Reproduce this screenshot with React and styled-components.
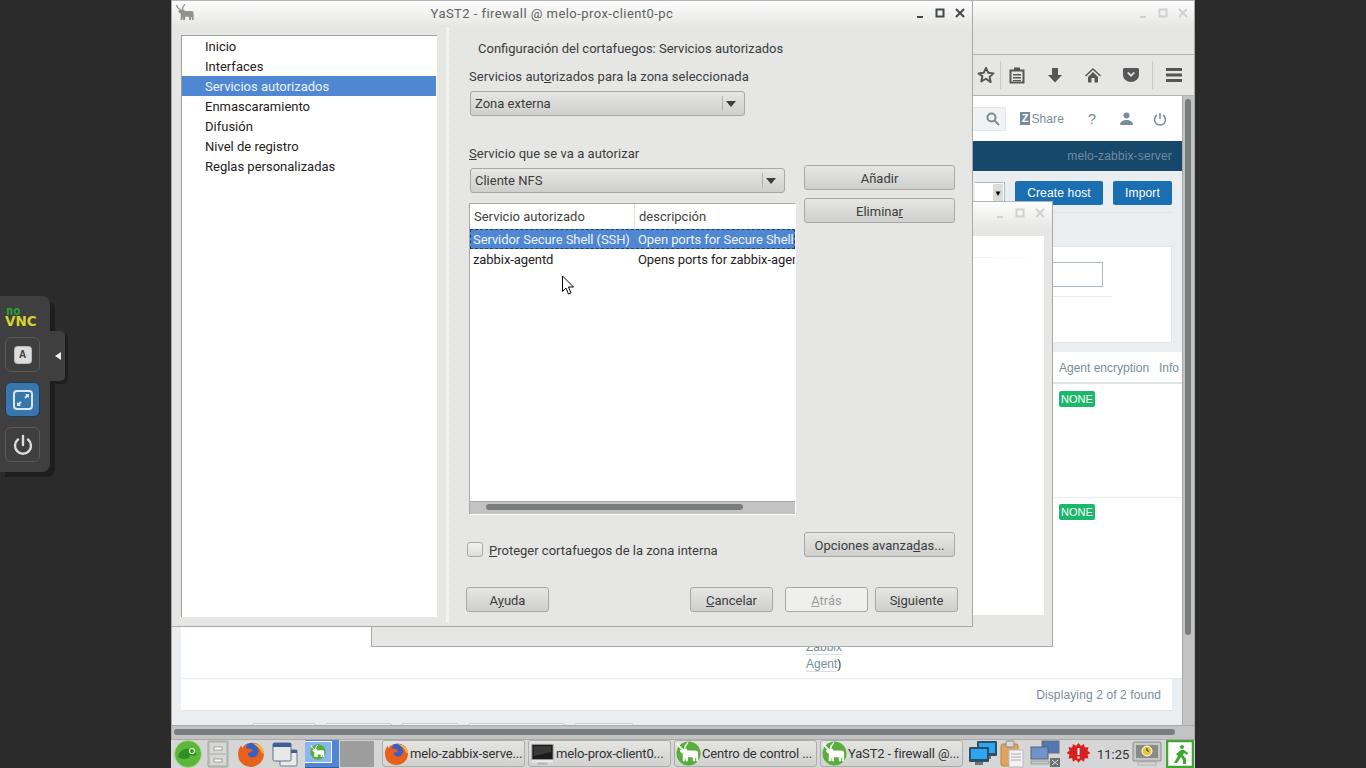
import React from "react";
import styled, { createGlobalStyle } from "styled-components";

const Global = createGlobalStyle`
  html, body { margin: 0; padding: 0; background: #2b2b2b; overflow: hidden; }
  * { box-sizing: border-box; }
`;

const Desktop = styled.div`
  position: relative; width: 1366px; height: 768px; overflow: hidden;
  background: #2b2b2b; font-family: Roboto, sans-serif; font-size: 13px; color: #3a3d3d;
`;

/* ---------- window chrome ---------- */
const Win = styled.section`
  position: absolute; left: ${p => p.$x}px; top: ${p => p.$y}px;
  width: ${p => p.$w}px; height: ${p => p.$h}px;
  display: flex; flex-direction: column; overflow: hidden;
  background: #e6e6e4; border: 1px solid #a9aaa8; border-top-color: #b5b5b5;
`;
const TitleBar = styled.header`
  flex: none; height: ${p => p.$h || 24}px; position: relative;
  display: flex; align-items: center; justify-content: center; padding-right: 40px;
  background: linear-gradient(#fdfdfd, #e8e8e6);
  color: #5d6363; font-size: 13px; letter-spacing: .45px;
`;
const WinButtons = styled.div`
  position: absolute; right: ${p => p.$r}px; top: 0; bottom: ${p => p.$b || 0}px;
  display: flex; align-items: center; gap: 8px;
  color: ${p => (p.$dim ? "#d0d2d0" : "#3f4a4a")};
`;
const WinBtn = styled.svg`width: 12px; height: 12px; display: block;`;
const Controls = ({ r, b, dim }) => (
  <WinButtons $r={r} $b={b} $dim={dim}>
    <WinBtn viewBox="0 0 12 12"><rect x="3" y="9" width="6" height="2" fill="currentColor" /></WinBtn>
    <WinBtn viewBox="0 0 12 12"><rect x="2.5" y="2.5" width="7" height="7" fill="none" stroke="currentColor" strokeWidth="2" /></WinBtn>
    <WinBtn viewBox="0 0 12 12"><path d="M2 2l8 8M10 2l-8 8" stroke="currentColor" strokeWidth="2" /></WinBtn>
  </WinButtons>
);
const TitleIcon = styled.svg`position: absolute; left: 3px; top: 2px; width: 21px; height: 21px;`;

/* ---------- browser ---------- */
const MenuGap = styled.div`flex: none; height: 30px; background: #e6e6e4; border-bottom: 1px solid #b4b4b2;`;
const NavBar = styled.div`
  flex: none; height: 41px; display: flex; align-items: center; justify-content: flex-end;
  background: #e6e6e4; border-bottom: 1px solid #b4b4b2; color: #565656;
`;
const NavSlot = styled.span`
  width: ${p => p.$w}px; display: flex; justify-content: center; align-items: center;
  height: 28px; ${p => p.$line && "border-left: 1px solid #c9c9c7;"}
`;
const BrowserBody = styled.div`flex: 1; min-height: 0; display: flex;`;
const Page = styled.main`
  flex: 1; min-width: 0; overflow: hidden; background: #ebeef0;
  font-family: "Liberation Sans", Arial, sans-serif; font-size: 12px; color: #768d99;
`;
const VScroll = styled.div`flex: none; width: 12px; background: #c2c3c2; border-left: 1px solid #a9aaa8; padding: 3px 2px 0 2px;`;
const VThumb = styled.div`width: 6px; height: 536px; border-radius: 3px; background: #7a7d7d;`;
const HScroll = styled.div`flex: none; height: 14px; background: #c2c3c2; border-top: 1px solid #a9aaa8; padding: 3px 19px 0 2px;`;
const HThumb = styled.div`height: 6px; border-radius: 3px; background: #7a7d7d;`;

const PageHead = styled.div`height: 45px; background: #fff; display: flex; align-items: center; justify-content: flex-end;`;
const SearchBox = styled.div`
  width: 40px; height: 24px; margin-right: 14px; padding-right: 5px; background: #f0f2f3; border: 1px solid #e6e9ea;
  border-left: 0; display: flex; align-items: center; justify-content: flex-end; color: #768d99;
`;
const ShareLink = styled.span`display: flex; align-items: center; gap: 1px; width: 44px; margin-right: 11px; letter-spacing: .1px;`;
const ShareZ = styled.b`
  width: 13px; height: 13px; background: #768d99; color: #fff; font-size: 11px; line-height: 13px;
  text-align: center; font-family: "Liberation Sans", sans-serif;
`;
const HeadIcon = styled.span`width: 34px; display: flex; justify-content: center; color: #768d99; font-size: 15px;`;
const HeadEnd = styled.span`width: 5px;`;
const BlueBar = styled.div`
  height: 30px; padding-right: 10px; background: #17476a; color: #6f8b9c; letter-spacing: .15px;
  display: flex; align-items: center; justify-content: flex-end;
`;
const ActionRow = styled.div`
  height: 42px; margin: 0 10px 0 9px; border-bottom: 1px solid #dfe4e6;
  display: flex; align-items: flex-start; justify-content: flex-end; padding-top: 10px; gap: 10px;
`;
const PageSelect = styled.div`
  width: 30px; height: 22px; margin-top: 1px; background: #fff; border: 1px solid #a9bac4; border-left: 0;
  display: flex; justify-content: flex-end; padding: 1px;
`;
const PageSelectArrow = styled.span`
  width: 10px; background: #dcdcdc; color: #000; font-size: 8px; line-height: 20px; text-align: center;
`;
const BlueBtn = styled.div`
  width: ${p => p.$w}px; height: 24px; border-radius: 2px; background: #1a6fb3; color: #fff; letter-spacing: .15px;
  display: flex; align-items: center; justify-content: center;
`;
const FilterCard = styled.div`
  margin: 33px 10px 9px 9px; height: 97px; background: #fff; border: 1px solid #e1e5e7;
  display: flex; flex-direction: column; align-items: flex-end; padding: 15px 68px 0 0;
`;
const FilterInput = styled.div`width: 52px; height: 25px; border: 1px solid #a9bac4;`;
const FilterRule = styled.div`width: 70px; margin: 9px -9px 0 0; border-top: 1px solid #e8ebed;`;
const HostTable = styled.div`margin-left: 9px; background: #fff;`;
const HostRow = styled.div`
  height: ${p => p.$h}px; display: grid; grid-template-columns: 625px 253px 100px 1fr;
  border-bottom: ${p => p.$b || 1}px solid ${p => p.$c || "#e8ebed"};
`;
const HostHead = styled(HostRow)`align-items: center; padding-top: 2px;`;
const HostCell = styled.div`padding-top: ${p => p.$t || 0}px;`;
const LowCell = styled.div`align-self: end; padding-bottom: 6px; line-height: 16.5px; color: #333;`;
const HostLink = styled.span`border-bottom: 1px solid #d8dfe3; color: #768d99;`;
const NoneBadge = styled.span`
  display: inline-block; width: 36px; height: 16px; line-height: 16px; text-align: center; border-radius: 2px;
  background: #1db76b; color: #fff; font-size: 11px;
`;
const TableFoot = styled.div`
  height: 32px; margin: 0 10px 0 9px; background: #fff; border-bottom: 1px solid #e1e5e7;
  display: flex; align-items: center; justify-content: flex-end; padding-right: 11px; letter-spacing: .12px;
`;
const PeekRow = styled.div`display: flex; margin: 12px 0 0 80px; gap: 9px;`;
const PeekBtn = styled.div`width: ${p => p.$w}px; height: 6px; border: 1px solid #c3ccd1; border-radius: 2px; background: #f4f6f7;`;

/* ---------- middle window ---------- */
const MidBody = styled.div`flex: 1; padding: 9px 8px 31px 0; display: flex;`;
const MidPanel = styled.div`flex: 1; background: #fff; padding-top: 21px;`;
const MidRule = styled.div`height: 1px; background: linear-gradient(90deg, #e6e6e6 80%, #fff);`;

/* ---------- YaST ---------- */
const YastBody = styled.div`flex: 1; min-height: 0; display: flex; padding: 10px 0 9px 9px;`;
const Tree = styled.nav`
  flex: none; width: 256px; background: #fff; border-top: 1px solid #9f9f9d; border-left: 1px solid #9f9f9d;
  color: #1f2121;
`;
const TreeItem = styled.div`
  height: 20px; line-height: 22px; padding-left: 23px; margin-right: 1px;
  ${p => p.$on && "background: #5087d3; color: #eef3fa;"}
`;
const Splitter = styled.div`
  flex: none; width: 3px; margin: -8px 0 -6px 9px;
  background: repeating-conic-gradient(#fff 0 25%, transparent 0 50%) 0 0 / 2px 2px;
`;
const Pane = styled.div`flex: 1; min-width: 0; padding-left: 20px; display: flex; flex-direction: column;`;
const Heading = styled.div`height: 20px; line-height: 22px; margin: 3px 0 8px 9px;`;
const Label = styled.div`height: 20px; line-height: 22px; letter-spacing: .05px;`;
const Combo = styled.div`
  width: ${p => p.$w}px; height: 25px; margin: 5px 0 0 1px; padding-left: 4px; border: 1px solid #a8a8a6; border-radius: 3px;
  background: linear-gradient(#e6e6e4, #cfcfcd); display: flex; align-items: center; justify-content: space-between;
`;
const ComboArrow = styled.span`
  width: 22px; height: 15px; padding-right: 5px; border-left: 1px solid #b4b4b2; display: flex; align-items: center; justify-content: center;
  &::after { content: ""; border: 5px solid transparent; border-top: 6px solid #3c3f3f; border-bottom: 0; }
`;
const MainGrid = styled.div`display: flex; margin-top: 27px;`;
const LeftCol = styled.div`width: 335px;`;
const SideCol = styled.div`padding-top: 22px; display: flex; flex-direction: column; gap: 8px;`;
const Btn = styled.button`
  width: ${p => p.$w}px; height: 25px; padding: 2px 0 0; border: 1px solid #a8a8a6; border-radius: 3px;
  font: 13px Roboto, sans-serif; color: ${p => (p.disabled ? "#9b9d9d" : "#3a3d3d")};
  background: ${p => (p.disabled ? "#efefee" : "linear-gradient(#e6e6e4, #cfcfcd)")};
`;
const Table = styled.div`
  width: 327px; height: 312px; margin-top: 10px; display: flex; flex-direction: column;
  background: #fff; border-top: 1px solid #a9aaa8; border-left: 1px solid #a9aaa8; border-bottom: 1px solid #fff; border-right: 1px solid #fff;
`;
const THead = styled.div`flex: none; height: 24px; display: flex; align-items: center; color: #3f4242;`;
const TH = styled.div`
  flex: none; width: ${p => p.$w}px; padding-left: 4px; height: 100%; line-height: 26px; white-space: nowrap;
  ${p => p.$line && "border-right: 1px solid #e3e3e1;"}
`;
const TBody = styled.div`flex: 1; min-height: 0; padding-top: 1px; color: #1f2121;`;
const TR = styled.div`
  height: 20px; display: flex; align-items: center; overflow: hidden; white-space: nowrap; letter-spacing: -.08px;
  ${p => p.$on && "background: #5087d3; color: #eef3fa; outline: 1px dashed #1d3f70; outline-offset: -1px;"}
`;
const TD = styled.div`flex: none; width: ${p => p.$w}px; padding-left: 3px;`;
const TScroll = styled.div`flex: none; height: 13px; background: #c2c3c2; border-top: 1px solid #a9aaa8; padding: 2px 0 0 16px;`;
const TThumb = styled.div`width: 257px; height: 6px; border-radius: 3px; background: #7a7d7d;`;
const CheckRow = styled.div`display: flex; margin-top: 17px; justify-content: space-between; padding-right: 17px;`;
const CheckLabel = styled.label`display: flex; align-items: center; gap: 6px; margin: 10px 0 0 -2px; height: 15px;`;
const CheckText = styled.span`margin-top: 2px;`;
const CheckBox = styled.span`
  width: 16px; height: 15px; border: 1px solid #a8a8a6; border-radius: 3px; background: linear-gradient(#f2f2f1, #dcdcda);
`;
const Actions = styled.div`display: flex; margin: 30px 14px 0 -3px; gap: 10px;`;
const Push = styled.div`flex: 1;`;
const TightBtn = styled(Btn)`margin-left: ${p => p.$ml}px;`;

/* ---------- taskbar ---------- */
const Taskbar = styled.footer`
  position: absolute; left: 171px; top: 740px; width: 1024px; height: 28px; background: #d6d6d6;
  display: flex; align-items: center; overflow: hidden;
`;
const LaunchIcon = styled.svg`flex: none; display: block; width: ${p => p.$w}px; height: 28px; margin-left: ${p => p.$m}px;`;
const Pager = styled.div`flex: none; display: flex; margin: 0 8px 0 7px; height: 28px; align-items: center;`;
const PagerOn = styled.div`
  width: 34px; height: 28px; background: #4f86d1; border-bottom: 1px solid #2c5ea8; display: flex; padding: 1px 7px 4px 0;
`;
const PagerInner = styled.div`flex: 1; background: #8ab5ee; border: 1px solid #fff; border-left: 0; display: flex; align-items: center; justify-content: center;`;
const PagerOff = styled.div`width: 34px; height: 26px; margin-left: 1px; background: #9d9d9d;`;
const Task = styled.div`
  flex: none; align-self: flex-start; width: 143px; height: 27px; margin-right: 3px; padding: 0 4px 0 1px; border: 1px solid #adadab; border-radius: 3px;
  background: linear-gradient(#e4e4e2, #d2d2d0); display: flex; align-items: center; gap: 1px; color: #333; white-space: nowrap; letter-spacing: -.15px;
`;
const TaskText = styled.span`flex: 1;`;
const Clock = styled.span`flex: none; margin: 0 3px 0 7px; width: 32px; color: #333;`;

/* ---------- noVNC ---------- */
const VncPanel = styled.aside`
  position: absolute; left: 0; top: 296px; width: 50px; height: 176px; background: #3f3f3f;
  border-radius: 0 8px 8px 0; box-shadow: 5px 5px 0 #1e1e1e; padding: 10px 0 0 5px; display: flex; flex-direction: column;
`;
const VncHandle = styled.div`
  position: absolute; left: 50px; top: 331px; width: 15px; height: 50px; background: #3f3f3f; border-radius: 0 5px 5px 0;
  box-shadow: 3px 3px 0 #1e1e1e; display: flex; align-items: center; justify-content: center;
  &::after { content: ""; border: 4px solid transparent; border-right: 6px solid #eee; border-left: 0; }
`;
const LogoNo = styled.div`
  height: 10px; margin-left: 1px; font: bold 12px/10px "DejaVu Sans Mono", monospace; color: #25a82e;
`;
const LogoVnc = styled.div`
  height: 10px; font: bold 13.5px/10px "DejaVu Sans", sans-serif; color: #d4d42c;
  margin-bottom: 11px;
`;
const VncBtn = styled.div`
  width: 35px; height: 35px; margin-bottom: ${p => p.$mb}px; border-radius: 6px;
  background: ${p => (p.$on ? "#3a76ae" : "transparent")}; border: 1px solid ${p => (p.$on ? "#1d3c58" : "#595959")};
  display: flex; align-items: center; justify-content: center; color: #dcdcdc;
`;
const KeyCap = styled.span`
  width: 16px; height: 16px; border-radius: 3px; background: #ddd; color: #3f3f3f;
  font: bold 10px/15px "Liberation Sans", sans-serif; text-align: center; box-shadow: 0 0 0 1px #bbb;
`;

const Cursor = styled.svg`position: absolute; left: 561px; top: 275px; width: 14px; height: 21px;`;

/* ---------- drawings ---------- */
const Gnu = ({ c = "#fff" }) => (
  <g>
    <path d="M7 9C5 7 3 6 2 3M9 8c0-2 1-4 3-6" stroke={c} strokeWidth="1.6" fill="none" strokeLinecap="round" />
    <path fill={c} d="M5 9l6-1 1 2h8c2 0 3 1 3 3v8h-2v-4l-1 1v3h-2.500v-4h-5v4H10v-4l-1 4H7v-8l-2-1-1-2z" />
  </g>
);
const Yast = ({ size = 26 }) => (
  <svg viewBox="0 0 26 26" width={size} height={size} style={{ flex: "none" }}>
    <circle cx="13" cy="13" r="12.5" fill="#58ae3a" />
    <Gnu />
  </svg>
);
const Firefox = ({ size = 26 }) => (
  <svg viewBox="0 0 26 26" width={size} height={size} style={{ flex: "none" }}>
    <circle cx="14" cy="13" r="10.5" fill="#3b5fc0" />
    <path d="M14 3c6 0 11 4 11 10s-5 12-12 12S1 20 1 13c0-3 1-6 3-8l1 3c1-2 3-4 5-4-1 1-2 3-1 4 1 0 3 0 5 1 1 2-2 3-4 3 0 3 3 5 6 4 4-1 5-6 3-9-1-2-3-3-5-4z" fill="#e8601c" />
    <path d="M14 3c6 0 11 4 11 10l-2-1c-1-4-5-7-9-9z" fill="#f9b731" />
  </svg>
);
const Monitor = ({ x = 0, y = 0, w = 20, h = 15, fill = "#2aa7ee" }) => (
  <g>
    <rect x={x} y={y} width={w} height={h} rx="1" fill="#2f4f66" />
    <rect x={x + 2} y={y + 2} width={w - 4} height={h - 5} fill={fill} />
    <rect x={x + w / 2 - 4} y={y + h} width="8" height="3" fill="#6b7479" />
  </g>
);

export default function App() {
  return (
    <Desktop>
      <Global />

      <Win $x={171} $y={0} $w={1024} $h={740}>
        <TitleBar><Controls r={5} dim /></TitleBar>
        <MenuGap />
        <NavBar>
          <NavSlot $w={28}>
            <svg width="18" height="18" viewBox="0 0 24 24" fill="none" stroke="currentColor" strokeWidth="2.6" strokeLinejoin="round"><path d="M12 2.5l3 6.500 7 .8-5.200 4.700 1.500 7L12 17l-6.300 3.500 1.500-7L2 9.800l7-.8z" /></svg>
          </NavSlot>
          <NavSlot $w={33} $line>
            <svg width="16" height="18" viewBox="0 0 16 18"><path fill="none" stroke="currentColor" strokeWidth="2" d="M1.500 4.500h13v12h-13z" /><path fill="currentColor" d="M5 1.500h6v3.500H5zM4 8h8v1.500H4zM4 11h8v1.500H4zM4 14h8v1H4z" /></svg>
          </NavSlot>
          <NavSlot $w={43}>
            <svg width="16" height="16" viewBox="0 0 16 16"><path fill="currentColor" d="M5 1h6v7h4l-7 7.500L1 8h4z" /></svg>
          </NavSlot>
          <NavSlot $w={34}>
            <svg width="16" height="16" viewBox="0 0 16 16"><path fill="currentColor" d="M8 1L0 8.500l1 1L8 3l7 6.500 1-1zM3 10l5-5 5 5v5.500H9.500V11h-3v4.500H3z" /></svg>
          </NavSlot>
          <NavSlot $w={42}>
            <svg width="16" height="16" viewBox="0 0 16 16"><path fill="currentColor" fillRule="evenodd" d="M1.500 1h13c.8 0 1.500.7 1.500 1.500V8c0 4-4 7-8 7S0 12 0 8V2.500C0 1.700.7 1 1.500 1zM4 6l4 4 4-4-1.500-1L8 7.500 5.500 5z" /></svg>
          </NavSlot>
          <NavSlot $w={42} $line>
            <svg width="16" height="14" viewBox="0 0 16 14"><path fill="currentColor" d="M0 0h16v3H0zM0 5.500h16v3H0zM0 11h16v3H0z" /></svg>
          </NavSlot>
        </NavBar>
        <BrowserBody>
          <Page>
            <PageHead>
              <SearchBox>
                <svg width="14" height="14" viewBox="0 0 14 14" fill="none" stroke="currentColor" strokeWidth="2"><circle cx="5.500" cy="5.500" r="4" /><path d="M8.500 8.500l4.500 4.500" /></svg>
              </SearchBox>
              <ShareLink><ShareZ>Z</ShareZ>Share</ShareLink>
              <HeadIcon>?</HeadIcon>
              <HeadIcon>
                <svg width="13" height="13" viewBox="0 0 13 13"><circle cx="6.500" cy="3.500" r="3" fill="currentColor" /><path fill="currentColor" d="M0 13c0-3.500 3-5 6.500-5S13 9.500 13 13z" /></svg>
              </HeadIcon>
              <HeadIcon>
                <svg width="14" height="14" viewBox="0 0 14 14" fill="none" stroke="currentColor" strokeWidth="1.500"><path d="M7 1v6M4 3a5.500 5.500 0 1 0 6 0" /></svg>
              </HeadIcon>
              <HeadEnd />
            </PageHead>
            <BlueBar>melo-zabbix-server</BlueBar>
            <ActionRow>
              <PageSelect><PageSelectArrow>▼</PageSelectArrow></PageSelect>
              <BlueBtn $w={88}>Create host</BlueBtn>
              <BlueBtn $w={59}>Import</BlueBtn>
            </ActionRow>
            <FilterCard><FilterInput /><FilterRule /></FilterCard>
            <HostTable>
              <HostHead $h={32} $b={2} $c="#dfe4e7">
                <span /><span /><span>Agent encryption</span><span>Info</span>
              </HostHead>
              <HostRow $h={114}>
                <span /><span /><HostCell $t={7}><NoneBadge>NONE</NoneBadge></HostCell><span />
              </HostRow>
              <HostRow $h={181}>
                <span />
                <LowCell><HostLink>Zabbix</HostLink><br /><HostLink>Agent</HostLink>)</LowCell>
                <HostCell $t={6}><NoneBadge>NONE</NoneBadge></HostCell>
                <span />
              </HostRow>
            </HostTable>
            <TableFoot>Displaying 2 of 2 found</TableFoot>
            <PeekRow>
              <PeekBtn $w={64} /><PeekBtn $w={67} /><PeekBtn $w={58} /><PeekBtn $w={97} /><PeekBtn $w={59} />
            </PeekRow>
          </Page>
          <VScroll><VThumb /></VScroll>
        </BrowserBody>
        <HScroll><HThumb /></HScroll>
      </Win>

      <Win $x={371} $y={201} $w={682} $h={446}>
        <TitleBar $h={25}><Controls r={6} b={3} dim /></TitleBar>
        <MidBody><MidPanel><MidRule /></MidPanel></MidBody>
      </Win>

      <Win $x={171} $y={0} $w={802} $h={627}>
        <TitleBar>
          <TitleIcon viewBox="0 0 26 26"><Gnu c="#8f918d" /></TitleIcon>
          YaST2 - firewall @ melo-prox-client0-pc
          <Controls r={6} />
        </TitleBar>
        <YastBody>
          <Tree>
            <TreeItem>Inicio</TreeItem>
            <TreeItem>Interfaces</TreeItem>
            <TreeItem $on>Servicios autorizados</TreeItem>
            <TreeItem>Enmascaramiento</TreeItem>
            <TreeItem>Difusión</TreeItem>
            <TreeItem>Nivel de registro</TreeItem>
            <TreeItem>Reglas personalizadas</TreeItem>
          </Tree>
          <Splitter />
          <Pane>
            <Heading>Configuración del cortafuegos: Servicios autorizados</Heading>
            <Label>Servicios aut<u>o</u>rizados para la zona seleccionada</Label>
            <Combo $w={275}>Zona externa<ComboArrow /></Combo>
            <MainGrid>
              <LeftCol>
                <Label><u>S</u>ervicio que se va a autorizar</Label>
                <Combo $w={315}>Cliente NFS<ComboArrow /></Combo>
                <Table>
                  <THead>
                    <TH $w={165} $line>Servicio autorizado</TH>
                    <TH $w={160}>descripción</TH>
                  </THead>
                  <TBody>
                    <TR $on><TD $w={165}>Servidor Secure Shell (SSH)</TD><TD $w={160}>Open ports for Secure Shell server</TD></TR>
                    <TR><TD $w={165}>zabbix-agentd</TD><TD $w={160}>Opens ports for zabbix-agentd</TD></TR>
                  </TBody>
                  <TScroll><TThumb /></TScroll>
                </Table>
              </LeftCol>
              <SideCol>
                <Btn $w={151}>Añadir</Btn>
                <Btn $w={151}>Elimina<u>r</u></Btn>
              </SideCol>
            </MainGrid>
            <CheckRow>
              <CheckLabel><CheckBox /><CheckText><u>P</u>roteger cortafuegos de la zona interna</CheckText></CheckLabel>
              <Btn $w={151}>Opciones avanza<u>d</u>as...</Btn>
            </CheckRow>
            <Actions>
              <Btn $w={83}>A<u>y</u>uda</Btn>
              <Push />
              <Btn $w={83}><u>C</u>ancelar</Btn>
              <TightBtn $w={83} $ml={2} disabled><u>A</u>trás</TightBtn>
              <TightBtn $w={83} $ml={-3}>S<u>i</u>guiente</TightBtn>
            </Actions>
          </Pane>
        </YastBody>
      </Win>

      <Taskbar>
        <LaunchIcon $w={30} $m={2} viewBox="0 0 30 28">
          <circle cx="15" cy="14" r="13.500" fill="#5cb83c" stroke="#a5dc8d" />
          <path d="M5 17c1-6 6-9 11-8 4 0 7 3 8 6-2 1-5 1-7 0l-1 3c-4 2-8 1-11-1z" fill="#2f8f22" />
          <circle cx="19" cy="11" r="2.500" fill="none" stroke="#d7f2cb" strokeWidth="1.200" />
        </LaunchIcon>
        <LaunchIcon $w={22} $m={4} viewBox="0 0 22 28">
          <rect x="1" y="1" width="20" height="26" rx="1" fill="#bfc1bf" stroke="#a3a5a3" />
          <rect x="3" y="3" width="16" height="10" fill="#d7d8d6" />
          <rect x="3" y="15" width="16" height="10" fill="#d7d8d6" />
          <rect x="7" y="7" width="8" height="3" fill="#fff" stroke="#8d8d8d" strokeWidth=".8" />
          <rect x="7" y="19" width="8" height="3" fill="#fff" stroke="#8d8d8d" strokeWidth=".8" />
        </LaunchIcon>
        <LaunchIcon as="span" $w={28} $m={8}><Firefox size={28} /></LaunchIcon>
        <LaunchIcon $w={26} $m={7} viewBox="0 0 26 28">
          <rect x="8" y="10" width="17" height="16" rx="1" fill="#eaeaea" stroke="#707f8c" />
          <rect x="1" y="3" width="18" height="18" rx="1.500" fill="#e8e8e6" stroke="#5a6f8c" />
          <rect x="1" y="3" width="18" height="4" fill="#3d5f9c" />
          <rect x="19" y="10" width="6" height="3" fill="#3d5f9c" />
        </LaunchIcon>
        <Pager>
          <PagerOn><PagerInner><Yast size={16} /></PagerInner></PagerOn>
          <PagerOff />
        </Pager>
        <Task>
          <Firefox size={25} />
          <TaskText>melo-zabbix-serve...</TaskText>
        </Task>
        <Task>
          <svg width="25" height="26" viewBox="0 0 26 26" style={{ flex: "none" }}>
            <rect x="2" y="3" width="22" height="16" fill="#1c1c1c" stroke="#9a9a9a" />
            <path d="M4 5h18v6L4 15z" fill="#3a3a3a" />
            <rect x="2" y="19" width="22" height="3" fill="#e6e6e6" />
            <rect x="8" y="22" width="10" height="2" fill="#b5b5b5" />
          </svg>
          <TaskText>melo-prox-client0...</TaskText>
        </Task>
        <Task><Yast size={25} /><TaskText>Centro de control ...</TaskText></Task>
        <Task><Yast size={25} /><TaskText>YaST2 - firewall @...</TaskText></Task>
        <LaunchIcon $w={30} $m={2} viewBox="0 0 30 28">
          <Monitor x={9} y={1} w={20} h={15} />
          <Monitor x={1} y={7} w={20} h={15} />
        </LaunchIcon>
        <LaunchIcon $w={24} $m={2} viewBox="0 0 24 28">
          <rect x="1" y="4" width="17" height="22" rx="2" fill="#e0a55d" stroke="#b9853f" />
          <rect x="6" y="1" width="8" height="6" rx="1" fill="#d9d9d9" stroke="#888" />
          <rect x="9" y="10" width="14" height="17" fill="#f3f3f3" stroke="#bbb" />
          <path d="M11 14h10M11 17h10M11 20h10" stroke="#aaa" />
        </LaunchIcon>
        <LaunchIcon $w={31} $m={6} viewBox="0 0 31 28">
          <rect x="12" y="1" width="17" height="12" fill="#5277b5" stroke="#6b6f73" />
          <rect x="1" y="7" width="17" height="12" fill="#6f94cc" stroke="#5d6165" />
          <rect x="1" y="21" width="18" height="3" fill="#c9c9c9" stroke="#777" strokeWidth=".6" />
          <rect x="20" y="18" width="10" height="9" fill="#6b7074" />
          <path d="M22 20l6 5M28 20l-6 5" stroke="#ddd" />
        </LaunchIcon>
        <LaunchIcon $w={23} $m={6} viewBox="0 0 23 28">
          <path d="M11.500 3l2.500 3 3-2 .8 3.500 3.700-.2-1 3.500 3 2-3 2 1 3.700-3.700-.2-.8 3.500-3-2-2.500 3-2.500-3-3 2-.8-3.500-3.700.2 1-3.700-3-2 3-2-1-3.500 3.700.2.800-3.500 3 2z" fill="#d91f1f" />
          <rect x="10.500" y="8" width="2" height="7" fill="#fff" />
          <rect x="10.500" y="16.500" width="2" height="2" fill="#fff" />
        </LaunchIcon>
        <Clock>11:25</Clock>
        <LaunchIcon $w={30} viewBox="0 0 30 28">
          <rect x="1" y="2" width="28" height="19" rx="1" fill="#c5c5c3" stroke="#8f8f8d" />
          <rect x="4" y="5" width="22" height="13" fill="#8a8a86" />
          <circle cx="15" cy="11" r="5" fill="#e7c93a" stroke="#fff" />
          <path d="M15 8v3h2" stroke="#333" fill="none" />
          <rect x="6" y="22" width="18" height="3" fill="#d8d8d6" stroke="#999" strokeWidth=".6" />
        </LaunchIcon>
        <LaunchIcon $w={28} $m={4} viewBox="0 0 28 28">
          <rect x="1" y="1" width="26" height="26" fill="#fff" stroke="#3fa62e" strokeWidth="2.500" />
          <circle cx="16" cy="7" r="2" fill="#3aa82a" />
          <path d="M15 10l-5 4 2 2-4 7h3l4-6 2 3v4h3v-5l-3-4 1-2 3 2 1-2-4-3z" fill="#3aa82a" />
        </LaunchIcon>
      </Taskbar>

      <VncPanel>
        <LogoNo>no</LogoNo>
        <LogoVnc>VNC</LogoVnc>
        <VncBtn $mb={10}><KeyCap>A</KeyCap></VncBtn>
        <VncBtn $mb={10} $on>
          <svg width="22" height="22" viewBox="0 0 22 22" fill="none" stroke="#dce6f0" strokeWidth="2"><rect x="2" y="2" width="18" height="18" rx="3" /><path fill="#dce6f0" stroke="none" d="M13 5h4v4l-1.300-1.300-2 2-1.400-1.400 2-2zM9 17H5v-4l1.300 1.300 2-2 1.400 1.400-2 2z" /></svg>
        </VncBtn>
        <VncBtn $mb={0}>
          <svg width="20" height="22" viewBox="0 0 20 22" fill="none" stroke="#dcdcdc" strokeWidth="2.400" strokeLinecap="round"><path d="M10 2v9M5 5.500a8 8 0 1 0 10 0" /></svg>
        </VncBtn>
      </VncPanel>
      <VncHandle />

      <Cursor viewBox="0 0 14 21">
        <path d="M1.500 1v15.500l3.500-3.500 2.500 6 2.500-1-2.500-6h5z" fill="#fff" stroke="#000" strokeWidth="1" strokeLinejoin="miter" />
      </Cursor>
    </Desktop>
  );
}
